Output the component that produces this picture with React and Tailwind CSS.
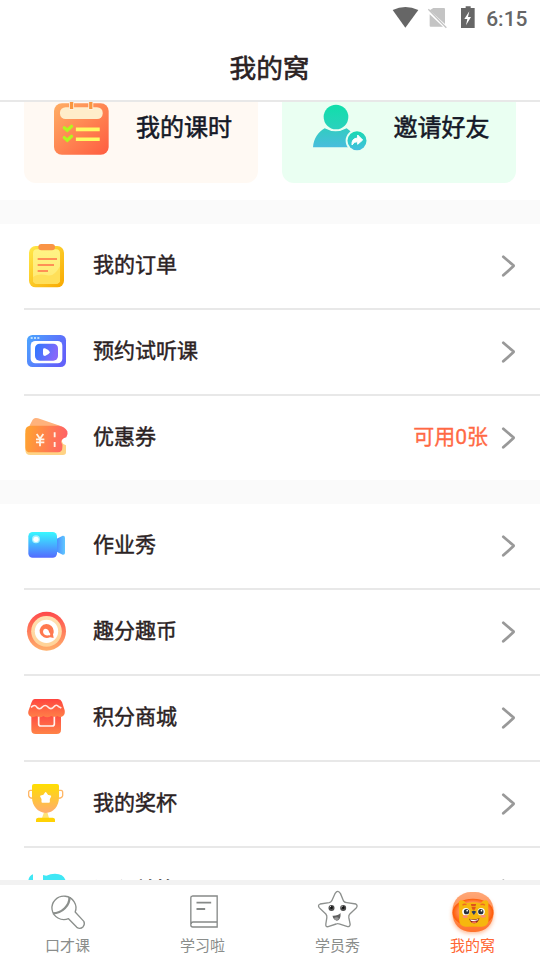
import React from "react";

const Svg = ({ viewBox, children }) => (
  <svg viewBox={viewBox} className="h-11 w-11 shrink-0 overflow-visible" fill="none">
    {children}
  </svg>
);

const Gradient = ({ id, from, to, x2 = 0, y2 = 1 }) => (
  <linearGradient id={id} x1="0" y1="0" x2={x2} y2={y2}>
    <stop stopColor={from} />
    <stop offset="1" stopColor={to} />
  </linearGradient>
);

const OrderIcon = () => (
  <Svg viewBox="27 42 132 132">
    <defs>
      <Gradient id="order" from="#ffe94a" to="#f8a800" x2={1} />
      <Gradient id="orderPage" from="#fff485" to="#ffe873" />
    </defs>
    <rect x="42" y="48" width="105" height="124" rx="20" fill="url(#order)" />
    <rect x="54" y="58" width="81" height="103" rx="12" fill="url(#orderPage)" />
    <path d="M54 141C72 130 82 133 96 136C113 140 123 129 135 109V149Q135 161 123 161H66Q54 161 54 149Z" fill="#ffdf59" />
    <rect x="70" y="42" width="50" height="19" rx="9" fill="#fa9446" />
    <path d="M68 87H126M68 105H117M68 123H99" stroke="#ff9055" strokeWidth="6" />
  </Svg>
);

const TrialIcon = () => (
  <Svg viewBox="27 300 132 132">
    <defs>
      <Gradient id="trial" from="#4ba6ff" to="#6262fa" x2={1} y2={0.5} />
      <Gradient id="trialInner" from="#2979ff" to="#8667fa" x2={1} y2={0.3} />
    </defs>
    <rect x="36" y="315" width="117" height="96" rx="16" fill="url(#trial)" />
    <path d="M47 324H53M57 324H63M67 324H73" stroke="#dff4ff" strokeWidth="5" />
    <rect x="47" y="333" width="95" height="67" rx="14" fill="#fff" />
    <rect x="60" y="341" width="69" height="51" rx="14" fill="url(#trialInner)" />
    <path d="M84 359Q84 354 90 355Q102 360 105 367Q102 374 90 378Q84 378 84 372Z" fill="#fff" />
  </Svg>
);

const CouponIcon = () => (
  <Svg viewBox="27 78 132 132">
    <defs>
      <Gradient id="coupon" from="#ffa52f" to="#ff6265" x2={1} y2={0.1} />
    </defs>
    <path d="M43 108L53 89Q58 81 69 85L137 108Z" fill="#ffb27c" />
    <path d="M31 130H145L140 154Q142 162 153 166V187Q153 195 144 195H46Q31 195 31 180Z" fill="#ffd385" />
    <path d="M47 107H130Q150 109 157 124Q160 134 154 142C142 145 137 153 140 160Q144 163 142 173Q142 186 129 187H46Q32 187 31 173V123Q31 108 47 107Z" fill="url(#coupon)" />
    <path d="M65 132L75 146L85 132M63 148H88M63 157H88M75 146V169M119 127V142M119 156V171" stroke="#fff3e6" strokeWidth="5.5" />
  </Svg>
);

const VideoIcon = () => (
  <Svg viewBox="27 42 132 132">
    <defs>
      <Gradient id="video" from="#38f8ff" to="#536bff" />
      <Gradient id="videoLens" from="#4a8dff" to="#60c8ff" x2={1} y2={0} />
    </defs>
    <path d="M125 86L143 77Q150 76 150 83V129Q150 135 143 134L125 125Z" fill="url(#videoLens)" />
    <rect x="40" y="66" width="86" height="77" rx="13" fill="url(#video)" />
    <circle cx="63" cy="88" r="12" fill="#a4f1ff" />
    <circle cx="63" cy="88" r="8" fill="#fff" />
  </Svg>
);

const CoinIcon = () => (
  <Svg viewBox="27 300 132 132">
    <defs>
      <Gradient id="coin" from="#ff494b" to="#ffb06b" />
      <Gradient id="coinRim" from="#ffe1b3" to="#ffd296" />
    </defs>
    <circle cx="94.500" cy="364" r="58.500" fill="url(#coin)" />
    <circle cx="94.500" cy="364" r="46" fill="url(#coinRim)" />
    <circle cx="94.500" cy="364" r="35" fill="#fff" />
    <path d="M94 342A22 21 0 1 0 105 382L116 384L114 373Q117 368 116 362A22 21 0 0 0 94 342Z" fill="#ff7950" />
    <path d="M90 356C97 356 102 360 102 366L106 372Q106 377 101 376C92 377 84 373 84 365Q84 357 90 356Z" fill="#fff" />
  </Svg>
);

const ShopIcon = () => (
  <Svg viewBox="27 48 132 132">
    <defs>
      <Gradient id="shop" from="#ff4544" to="#ff8347" />
      <Gradient id="awning" from="#ff443f" to="#ff8048" />
    </defs>
    <path d="M49 99H138V149Q138 162 125 162H62Q49 162 49 149Z" fill="url(#shop)" />
    <path d="M59 57H129Q137 57 141 66L149 91Q151 103 144 108Q136 114 127 108Q120 115 109 108Q96 116 85 108Q75 116 64 108Q53 115 44 108Q37 102 41 91L50 66Q53 57 59 57Z" fill="url(#awning)" />
    <path d="M48 82Q59 71 66 82Q74 91 82 81Q91 72 99 81Q108 91 116 81Q124 71 131 80L139 84" stroke="#ffe9e4" strokeWidth="5" />
    <path d="M71 110V132Q71 138 77 138H112Q118 138 118 132V110" stroke="#fff4ef" strokeWidth="5" />
  </Svg>
);

const TrophyIcon = () => (
  <Svg viewBox="27 306 132 132">
    <defs>
      <Gradient id="trophy" from="#ffdf00" to="#ffac70" />
    </defs>
    <path d="M53 331H46Q41 331 41 337V347Q42 354 53 355M130 331H138Q143 331 143 337V347Q142 354 130 355" stroke="#ffb767" strokeWidth="4" />
    <path d="M87 397H97L102 414H81Z" fill="#ffe278" />
    <path d="M57 312H126Q132 312 132 318V351C132 380 115 398 92 399C69 398 51 379 51 352V318Q51 312 57 312Z" fill="url(#trophy)" />
    <path d="M63 418Q64 414 70 413H113Q119 414 120 418V426H63Z" fill="#ffd205" />
    <path d="M92 339L98 347L106 349L102 357L102 366L92 365L82 366L82 357L78 349L86 347Z" fill="#fff" stroke="#fff" strokeWidth="5" strokeLinejoin="round" />
  </Svg>
);

const ExchangeIcon = () => (
  <Svg viewBox="27 84 132 132">
    <path d="M39 127Q41 107 54 103V156H39ZM84 105L94 107Q106 101 120 101Q145 101 151 119V156H84Z" fill="#40e7f5" />
  </Svg>
);

const RacketIcon = () => (
  <Svg viewBox="91.5 150 132 132">
    <g stroke="#8b8f8c" strokeWidth="4" strokeLinejoin="round">
      <path d="M159 236A36 35 0 1 1 179 216L205 244Q209 252 203 260Q194 269 184 262Z" />
      <path d="M162 171C163 196 140 220 112 220" strokeWidth="7" />
    </g>
  </Svg>
);

const BookIcon = () => (
  <Svg viewBox="496.5 150 132 132">
    <g stroke="#868988" strokeWidth="4">
      <path d="M530 168H605V261H532Q526 261 526 255V173Q526 168 531 168ZM527 252Q527 246 533 246H605" />
      <path d="M543 188H587M543 207H569" strokeWidth="5.500" />
    </g>
  </Svg>
);

const StarIcon = () => (
  <Svg viewBox="76.5 60 132 132">
    <path d="M134 70Q142 58 150 71L159 93Q163 98 169 98L196 102Q203 107 197 114L178 132Q174 136 175 143L179 163Q178 172 169 169L146 162Q142 160 137 162L113 170Q105 172 106 162L109 143Q110 137 106 132L86 113Q81 105 89 102L116 98Q121 97 124 92Z" stroke="#8d908e" strokeWidth="4" />
    <circle cx="123" cy="114" r="9" fill="#4d4d4d" />
    <circle cx="158" cy="114" r="9" fill="#4d4d4d" />
    <circle cx="123" cy="113" r="4" fill="#111" />
    <circle cx="158" cy="113" r="4" fill="#111" />
    <path d="M118 111L121 109M153 111L156 109" stroke="#fff" strokeWidth="3" />
    <path d="M126 137Q142 138 150 129Q152 150 139 152Q128 149 126 137Z" fill="#606060" />
    <ellipse cx="138" cy="146" rx="7" ry="4" fill="#999" />
  </Svg>
);

const TigerIcon = () => (
  <Svg viewBox="481.5 60 132 132">
    <defs>
      <Gradient id="tigerBg" from="#ffa878" to="#ff722b" />
      <radialGradient id="tigerRim">
        <stop offset="0.7" stopColor="#ff5700" stopOpacity="0" />
        <stop offset="1" stopColor="#ff5700" />
      </radialGradient>
      <filter id="glow" x="-30%" y="-30%" width="160%" height="160%">
        <feGaussianBlur stdDeviation="6" />
      </filter>
    </defs>
    <rect x="486" y="78" width="122" height="112" rx="52" fill="#ff8a4c" opacity="0.65" filter="url(#glow)" />
    <rect x="486" y="66" width="123" height="120" rx="55" fill="url(#tigerBg)" />
    <ellipse cx="547.500" cy="128" rx="61.500" ry="42" fill="url(#tigerRim)" />
    <path d="M505 103Q502 91 514 91Q522 92 528 100Q549 94 570 100Q577 90 587 91Q597 95 593 108L594 153Q591 170 574 170H524Q507 168 506 151Z" fill="#f6b70e" />
    <path d="M516 106Q521 101 528 104M570 104Q578 101 583 106" stroke="#ef6d22" strokeWidth="4" />
    <path d="M541 102H557L555 109H543ZM543 111H556L553 119H546Z" fill="#df531c" />
    <circle cx="526" cy="125" r="11" fill="#fff" />
    <circle cx="572" cy="125" r="11" fill="#fff" />
    <circle cx="528" cy="125" r="8" fill="#27313b" />
    <circle cx="571" cy="125" r="8" fill="#27313b" />
    <circle cx="530" cy="122" r="2.500" fill="#fff" />
    <circle cx="573" cy="122" r="2.500" fill="#fff" />
    <path d="M543 125Q550 120 557 125L550 135Z" fill="#283d68" />
    <ellipse cx="524" cy="140" rx="8" ry="4" fill="#ff8c72" />
    <ellipse cx="578" cy="139" rx="8" ry="4" fill="#ff8c72" />
    <path d="M536 146Q551 151 567 145Q563 160 551 160Q539 158 536 146Z" fill="#84251d" />
    <path d="M539 148Q551 152 564 147L562 151Q551 155 541 152Z" fill="#fff" />
    <ellipse cx="551" cy="157" rx="7" ry="3" fill="#f46c55" />
  </Svg>
);

const Chevron = () => (
  <svg viewBox="0 0 16 24" className="h-6 w-4" fill="none">
    <path d="M3.300 2.800L13.300 11.300Q13.800 11.800 13.300 12.300L3.300 21.300" stroke="#999" strokeWidth="2.800" strokeLinecap="round" />
  </svg>
);

const CalendarIcon = () => (
  <svg viewBox="102 21 166 162" className="h-[54px] w-[55px]" fill="none">
    <defs>
      <Gradient id="calendar" from="#ffae64" to="#ff5c40" x2={1} />
    </defs>
    <rect x="102" y="24" width="165" height="156" rx="24" fill="url(#calendar)" />
    <rect x="120" y="36" width="129" height="36" rx="17" fill="#ffedca" />
    <path d="M155 18V45M213 18V45" stroke="#fff0df" strokeWidth="15" />
    <path d="M155 18V42M213 18V42" stroke="#fa963f" strokeWidth="10" />
    <path d="M168 103H240M168 133H240" stroke="#fffa63" strokeWidth="11" />
    <path d="M133 98L142 106L155 94M133 128L142 136L155 124" stroke="#b5f51e" strokeWidth="10" strokeLinecap="round" />
  </svg>
);

const InviteIcon = () => (
  <svg viewBox="99 20 162 162" className="h-[54px] w-[54px]" fill="none">
    <defs>
      <Gradient id="head" from="#10dfaa" to="#2bd1bd" />
      <Gradient id="body" from="#32ccc1" to="#49bddd" />
      <Gradient id="share" from="#19d9b1" to="#45bee0" />
    </defs>
    <path d="M99 156C101 130 115 109 134 99Q167 117 200 99L218 113V156Z" fill="url(#body)" />
    <circle cx="168" cy="65" r="42" fill="#eafff2" />
    <circle cx="168" cy="65" r="37" fill="url(#head)" />
    <circle cx="231" cy="136" r="34" fill="#eafff2" />
    <circle cx="231" cy="136" r="28.500" fill="url(#share)" />
    <path d="M216 149Q214 129 233 128V119L248 134L233 147V139Q222 138 216 149Z" fill="#fff" stroke="#fff" strokeWidth="3" strokeLinejoin="round" />
  </svg>
);

const accountRows = [
  { label: "我的订单", icon: <OrderIcon /> },
  { label: "预约试听课", icon: <TrialIcon /> },
  { label: "优惠券", icon: <CouponIcon />, note: "可用0张" },
];

const activityRows = [
  { label: "作业秀", icon: <VideoIcon /> },
  { label: "趣分趣币", icon: <CoinIcon /> },
  { label: "积分商城", icon: <ShopIcon /> },
  { label: "我的奖杯", icon: <TrophyIcon /> },
  { label: "课程兑换", icon: <ExchangeIcon />, labelClass: "pb-0" },
];

const tabs = [
  { label: "口才课", icon: <RacketIcon /> },
  { label: "学习啦", icon: <BookIcon /> },
  { label: "学员秀", icon: <StarIcon /> },
  { label: "我的窝", icon: <TigerIcon />, active: true },
];

const MenuList = ({ rows }) => (
  <ul className="bg-white pl-6">
    {rows.map((row) => (
      <li
        key={row.label}
        className="flex h-[86px] items-center border-b-2 border-[#e8e8e8] pr-6 last:h-[84px] last:border-b-0"
      >
        {row.icon}
        <span
          className={`ml-[25px] text-[21px] leading-8 text-[#2b2223] [-webkit-text-stroke:0.45px_#2b2223] ${
            row.labelClass || "pb-0.5"
          }`}
        >
          {row.label}
        </span>
        <span className="ml-auto mr-3 pb-0.5 text-[21px] leading-8 text-[#ff6944] [-webkit-text-stroke:0.3px_#ff6944]">
          {row.note}
        </span>
        <Chevron />
      </li>
    ))}
  </ul>
);

const App = () => {
  return (
    <div
      className="flex h-[960px] w-[540px] flex-col overflow-hidden bg-white"
      style={{ fontFamily: "Roboto, 'Noto Sans CJK SC', sans-serif" }}
    >
      {/* Status bar */}
      <div className="flex h-9 shrink-0 items-center justify-end pr-[12.500px]">
        <svg viewBox="36 0 252 108" className="h-9 w-[84px]">
          <path d="M38 30Q76 12 115 30L76 83Z" fill="#666" />
          <path d="M160 24H192Q195 24 195 27V72L149 31ZM149 43L189 80H152Q149 80 149 77Z" fill="#c4c4c4" />
          <path d="M145 28L199 83" stroke="#c4c4c4" strokeWidth="4" />
          <path d="M257 19H272V24H284V84H243V24H257Z" fill="#666" />
          <path d="M268 34L253 57H262L258 76L273 51H264Z" fill="#fff" />
        </svg>
        <span className="ml-[10px] pt-0.5 text-[21px] font-medium leading-6 text-[#666]">6:15</span>
      </div>

      {/* Title */}
      <header className="flex h-[66px] shrink-0 items-center justify-center border-b-2 border-[#e8e8e8] pr-px">
        <h1 className="pt-0.5 text-[26.700px] leading-10 text-[#2b2223] [-webkit-text-stroke:0.6px_#2b2223]">我的窝</h1>
      </header>

      <main className="min-h-0 flex-1 overflow-hidden bg-[#fafafa]">
        <div className="flex h-[98px] gap-6 bg-white px-6 text-[24px] leading-9 text-[#151927] [-webkit-text-stroke:0.55px_#151927]">
          <div className="flex h-[81px] flex-1 items-start overflow-hidden rounded-b-[12px] bg-[#fff9f3] pl-[30px]">
            <CalendarIcon />
            <span className="ml-[27px] mt-2">我的课时</span>
          </div>
          <div className="flex h-[81px] flex-1 items-start overflow-hidden rounded-b-[12px] bg-[#eafff2] pl-[31px]">
            <InviteIcon />
            <span className="ml-[27px] mt-2">邀请好友</span>
          </div>
        </div>
        <div className="mt-6">
          <MenuList rows={accountRows} />
        </div>
        <div className="mt-6">
          <MenuList rows={activityRows} />
        </div>
      </main>

      {/* Bottom tabs */}
      <nav className="grid h-20 shrink-0 grid-cols-4 border-t-[5px] border-[#f2f2f2] bg-white">
        {tabs.map((tab) => (
          <div key={tab.label} className="flex flex-col items-center pt-[5px]">
            {tab.icon}
            <span className={`text-[15px] leading-6 ${tab.active ? "text-[#ff6633]" : "text-[#8a8d8b]"}`}>
              {tab.label}
            </span>
          </div>
        ))}
      </nav>
    </div>
  );
};

export default App;
